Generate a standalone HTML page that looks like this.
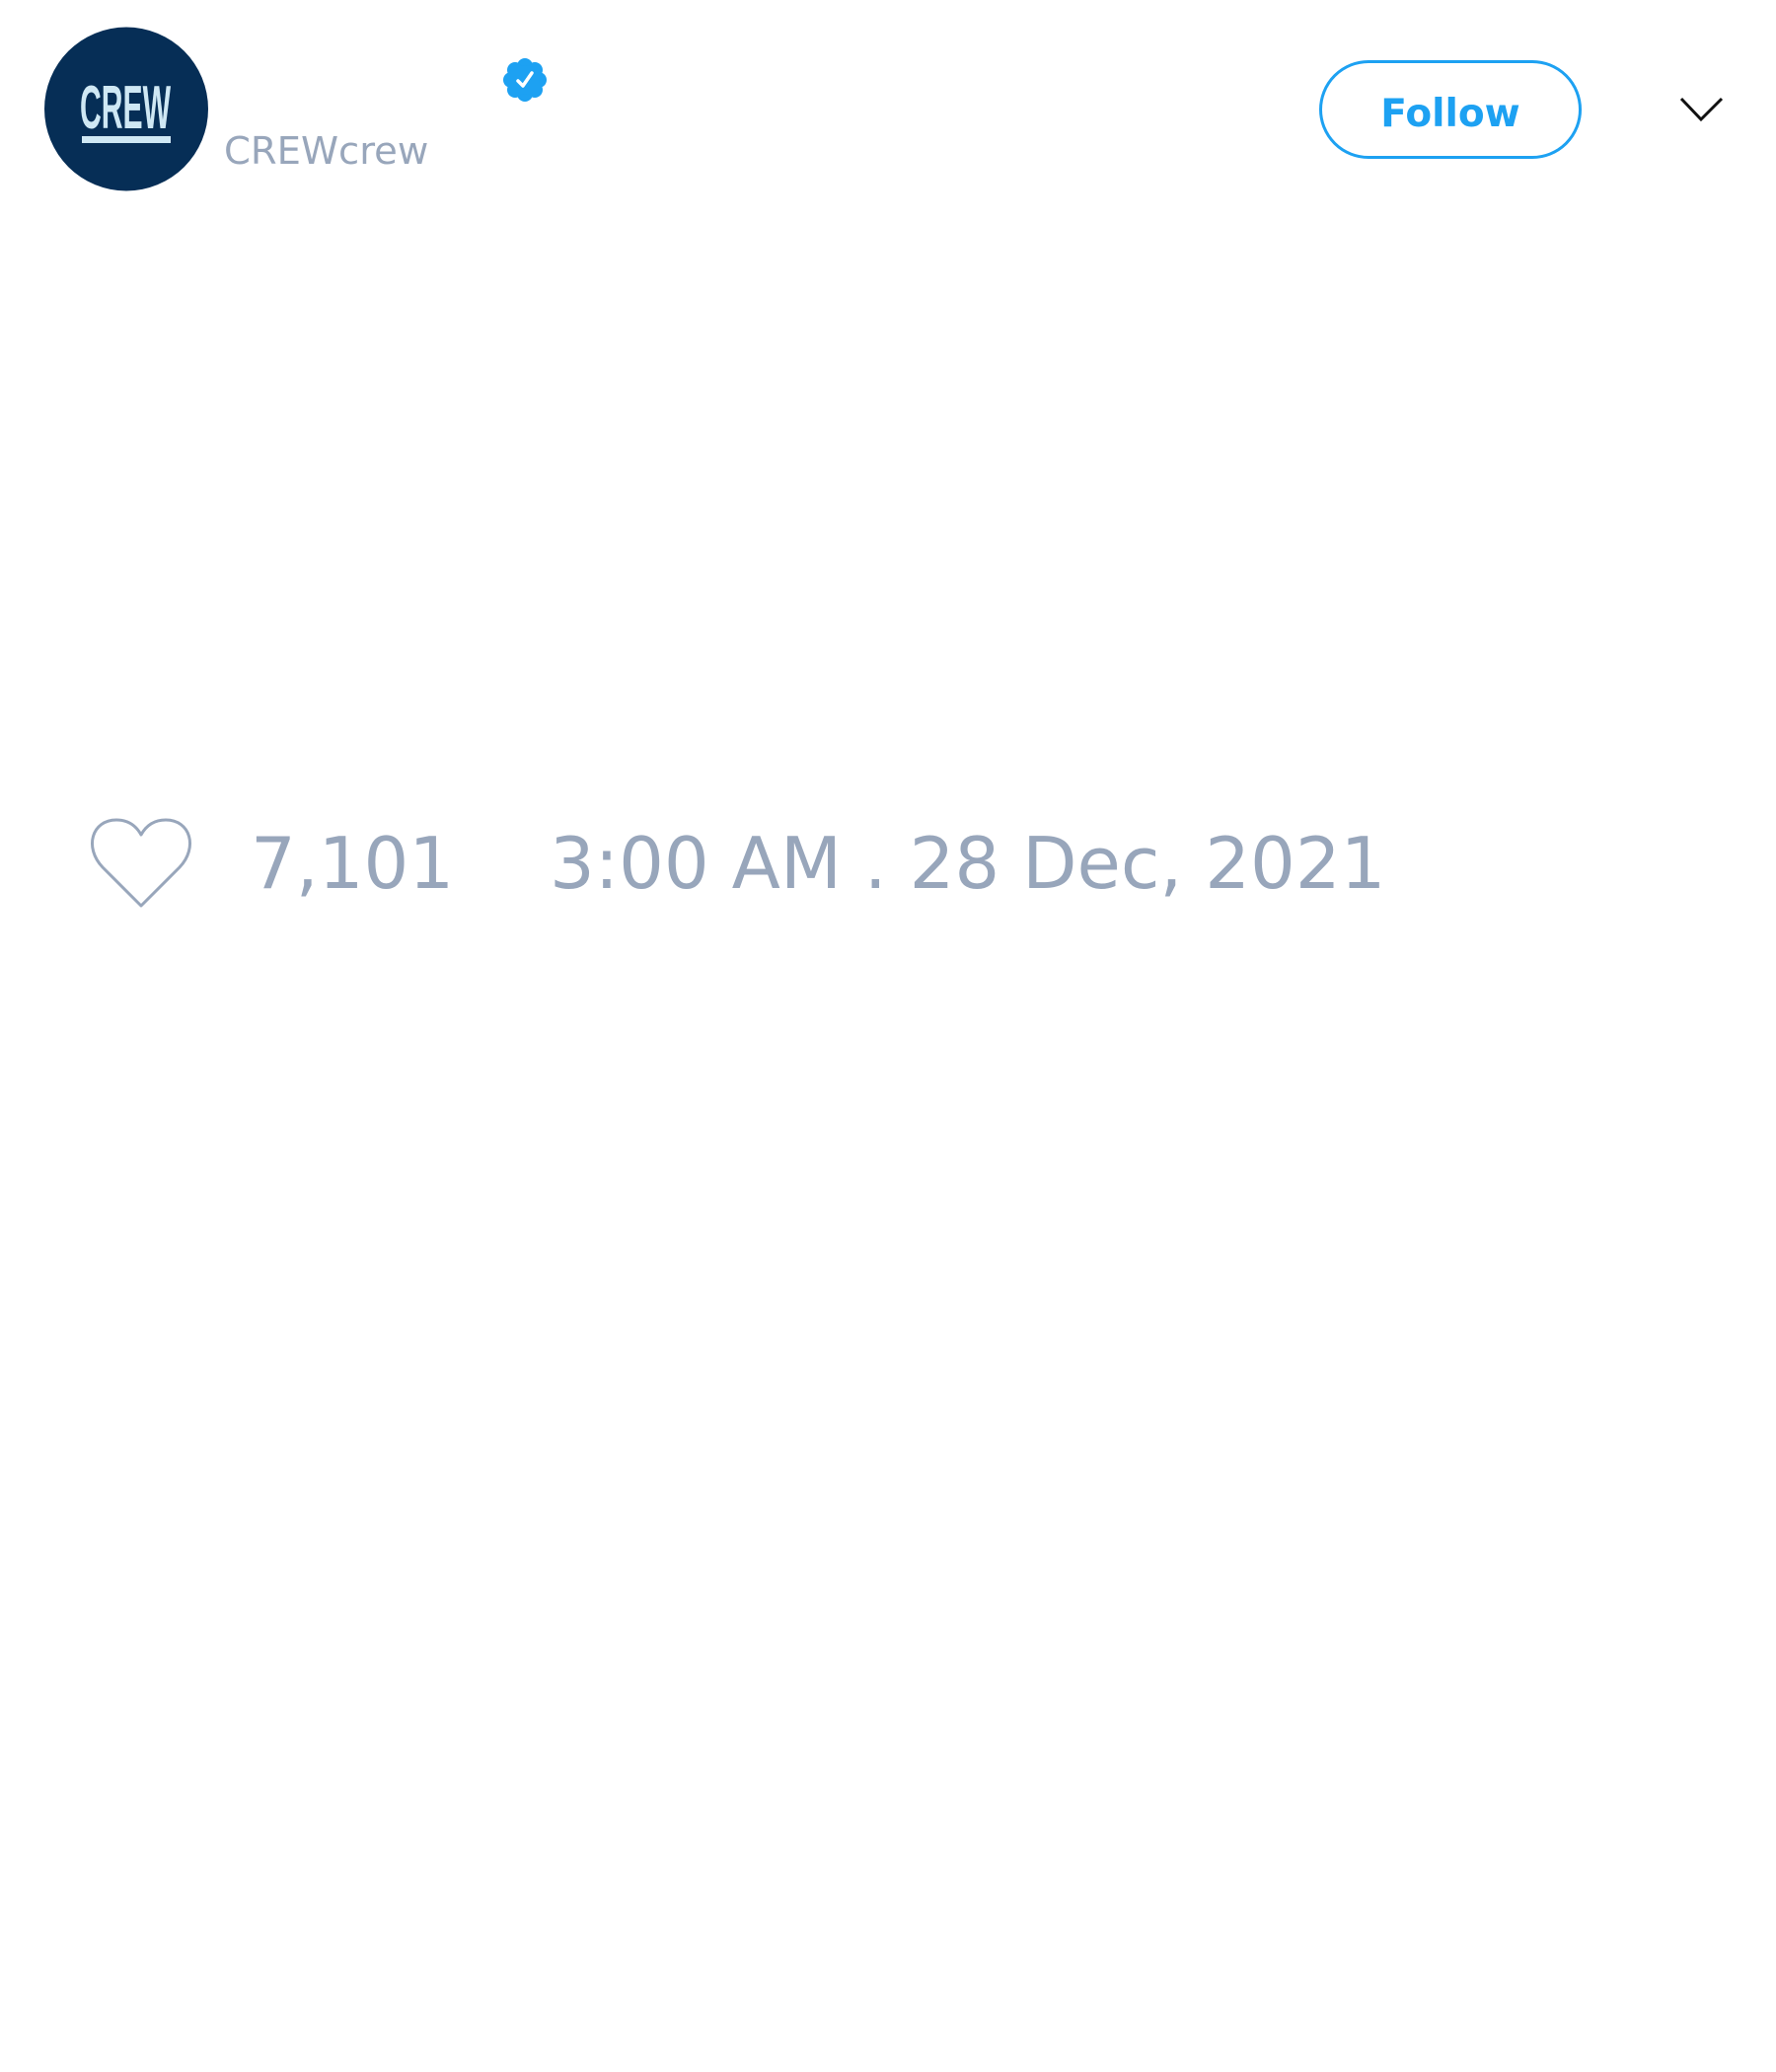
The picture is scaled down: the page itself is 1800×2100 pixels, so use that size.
<!DOCTYPE html>
<html><head><meta charset="utf-8"><style>
html,body{margin:0;padding:0;background:#fff;width:1800px;height:2100px;overflow:hidden}
body{position:relative;font-family:"DejaVu Sans","Liberation Sans",sans-serif}
.abs{position:absolute}
</style></head><body>
<svg class="abs" style="left:0;top:0" width="1800" height="1000" viewBox="0 0 1800 1000">
  <circle cx="128" cy="110.5" r="83" fill="#062e56"/>
  <text x="81" y="130" font-family="'Liberation Sans Narrow','Liberation Sans',sans-serif" font-size="62" font-weight="bold" fill="#cfe8f4" textLength="92" lengthAdjust="spacingAndGlyphs">CREW</text>
  <rect x="83" y="138" width="90" height="7" fill="#cfe8f4"/>
  <text x="227" y="166" font-family="'DejaVu Sans',sans-serif" font-size="38.5" fill="#98a6bb">CREWcrew</text>
  <g transform="translate(532,81)">
    <circle cx="0" cy="-14" r="8" fill="#1da1f2"/>
    <circle cx="10" cy="-10" r="8" fill="#1da1f2"/>
    <circle cx="14" cy="0" r="8" fill="#1da1f2"/>
    <circle cx="10" cy="10" r="8" fill="#1da1f2"/>
    <circle cx="0" cy="14" r="8" fill="#1da1f2"/>
    <circle cx="-10" cy="10" r="8" fill="#1da1f2"/>
    <circle cx="-14" cy="0" r="8" fill="#1da1f2"/>
    <circle cx="-10" cy="-10" r="8" fill="#1da1f2"/>
    <circle cx="0" cy="0" r="15" fill="#1da1f2"/>
    <path d="M-7,1 L-2,6 L7,-7" fill="none" stroke="#fff" stroke-width="3.5" stroke-linecap="round" stroke-linejoin="round"/>
  </g>
  <rect x="1338.5" y="62.5" width="263" height="97" rx="48.5" fill="none" stroke="#1da1f2" stroke-width="3"/>
  <text x="1470" y="128" text-anchor="middle" font-family="'DejaVu Sans',sans-serif" font-weight="bold" font-size="39" fill="#1da1f2">Follow</text>
  <path d="M1704,100 L1724,121 L1745,100" fill="none" stroke="#111" stroke-width="3"/>
  <path d="M143,918 L104,879 C85,859 93,831 118,831 C130,831 138,837 143,846 C148,837 156,831 168,831 C193,831 201,859 182,879 Z" fill="none" stroke="#98a6bb" stroke-width="3" stroke-linejoin="round"/>
  <text x="254" y="900" font-family="'DejaVu Sans',sans-serif" font-size="72" fill="#98a6bb">7,101</text>
  <text x="557" y="900" font-family="'DejaVu Sans',sans-serif" font-size="72" fill="#98a6bb">3:00 AM . 28 Dec, 2021</text>
</svg>
</body></html>
